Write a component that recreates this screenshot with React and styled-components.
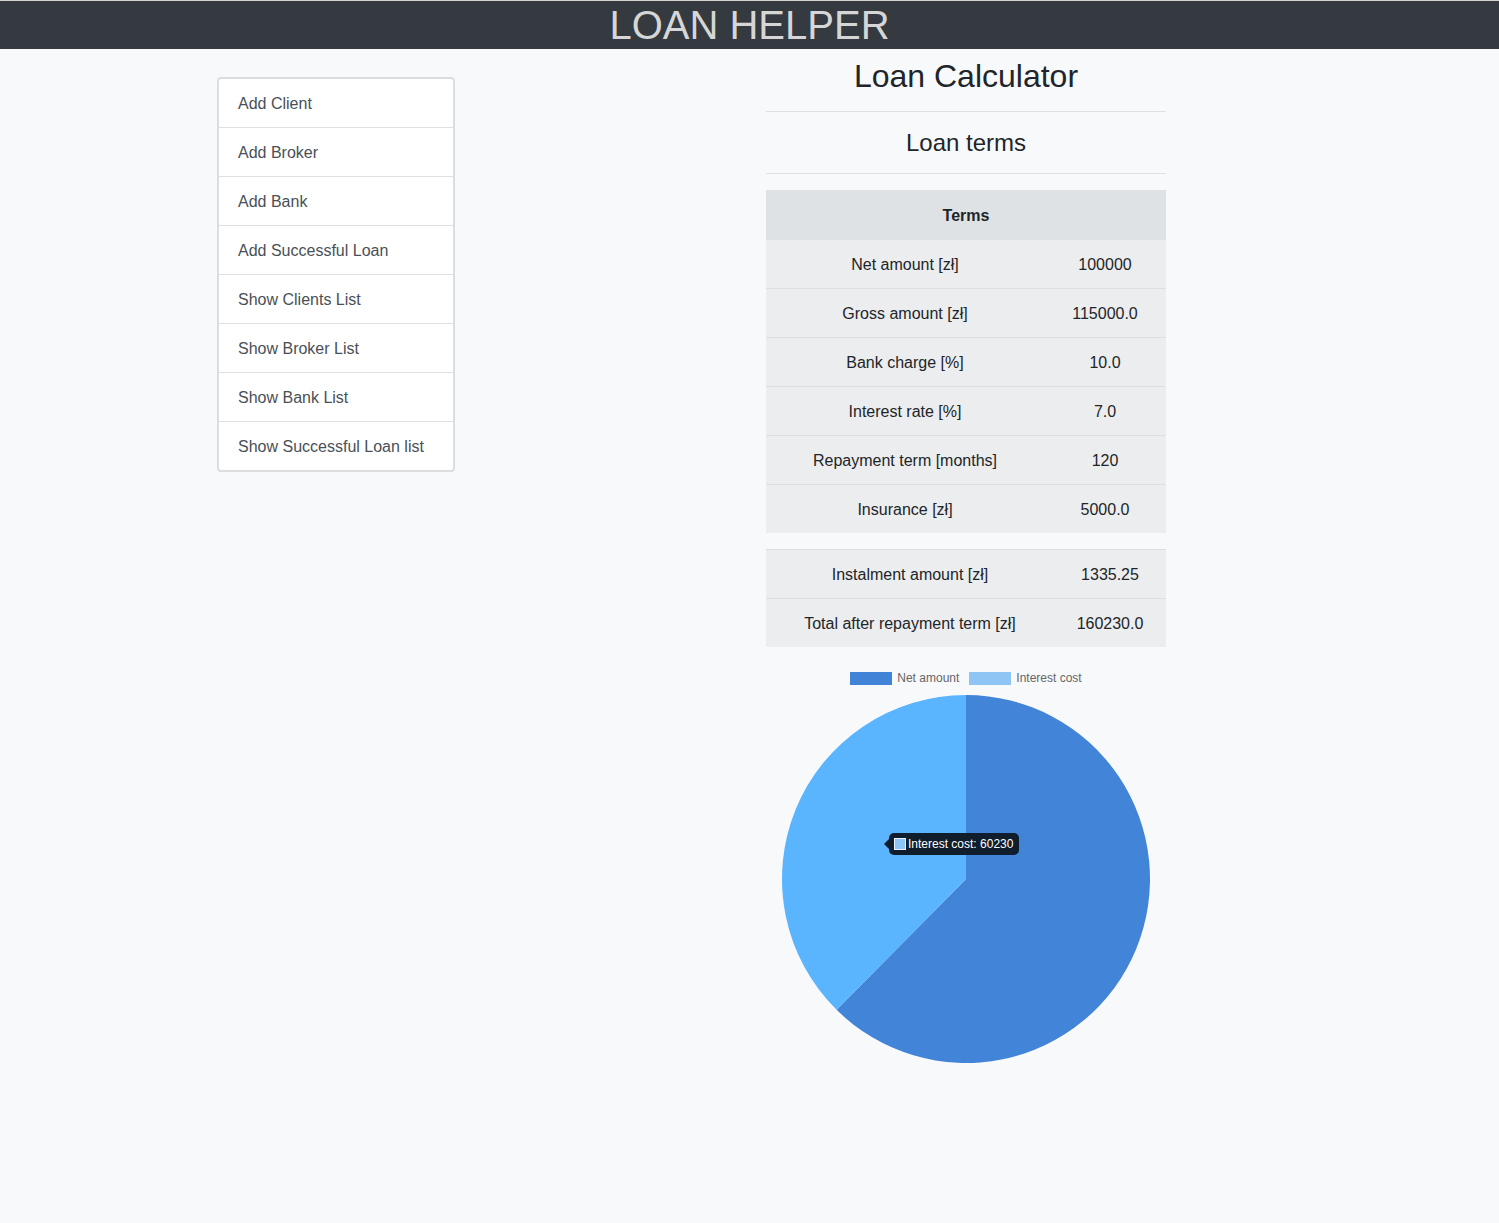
import React from 'react';
import styled, { createGlobalStyle } from 'styled-components';

const GlobalStyle = createGlobalStyle`
    body {
        margin: 0;
        background-color: #f8f9fa;
        font-family: 'Liberation Sans', Arial, sans-serif;
        color: #212529;
    }
`;

const Header = styled.div`
    height: 48px;
    border-top: 1px solid #d4d2cf;
    background-color: #343a40;
    color: #d6d6d6;
    font-size: 40px;
    line-height: 48px;
    text-align: center;
`;

const Main = styled.div`
    display: flex;
    align-items: flex-start;
    padding-left: 217px;
    gap: 311px;
`;

const Menu = styled.div`
    margin-top: 28px;
    width: 234px;
    border: 2px solid #dcdddf;
    border-radius: 4px;
    background-color: white;
    display: flex;
    flex-direction: column;
`;

const MenuItem = styled.div`
    padding: 13px 19px 11px;
    line-height: 24px;
    font-size: 16px;
    color: #495057;
    border-top: ${({ first }) => first ? 'none' : '1px solid #dfe0e2'};
`;

const Calculator = styled.div`
    width: 400px;
    display: flex;
    flex-direction: column;
    padding-top: 8px;
`;

const Title = styled.div`
    font-size: ${({ size }) => size}px;
    line-height: ${({ height }) => height}px;
    padding-top: ${({ shift }) => shift || 0}px;
    text-align: center;
    color: #212529;
`;

const Rule = styled.div`
    height: 1px;
    margin: 16px 0;
    background-color: #dfe0e1;
`;

const Table = styled.table`
    width: 100%;
    border-collapse: collapse;
    margin-bottom: 16px;
    font-size: 16px;
    line-height: 24px;
    background-color: #ecedee;
`;

const HeadCell = styled.th`
    padding: 13px 12px 11px;
    background-color: #dfe2e5;
    border-top: 1px solid #dfe2e5;
    font-weight: bold;
    text-align: center;
`;

const Cell = styled.td`
    padding: 13px 12px 11px;
    text-align: center;
    border-top: 1px solid #dde0e3;
    width: ${({ width }) => width ? width + 'px' : 'auto'};
`;

const Legend = styled.div`
    display: flex;
    justify-content: center;
    gap: 10px;
    padding: 9px 0 10px;
    font-size: 12px;
    line-height: 13px;
    color: #666;
`;

const LegendItem = styled.div`
    display: flex;
    align-items: center;
    gap: 5px;
`;

const LegendBox = styled.span`
    width: 42px;
    height: 13px;
    background-color: ${({ color }) => color};
`;

const ChartArea = styled.div`
    position: relative;
    width: 400px;
    height: 368px;
`;

const Tooltip = styled.div`
    position: absolute;
    left: 123px;
    top: 138px;
    height: 22px;
    padding: 0 6px 0 5px;
    display: flex;
    align-items: center;
    gap: 2px;
    background-color: #0f1d2d;
    border-radius: 5px;
    color: white;
    font-size: 12px;

    &::before {
        content: '';
        position: absolute;
        left: -5px;
        top: 6px;
        border-top: 5px solid transparent;
        border-bottom: 5px solid transparent;
        border-right: 5px solid #0f1d2d;
    }
`;

const TooltipSwatch = styled.span`
    width: 10px;
    height: 10px;
    background-color: #8ec5f5;
    border: 1px solid #e6f2fd;
`;

const menu = [
    'Add Client',
    'Add Broker',
    'Add Bank',
    'Add Successful Loan',
    'Show Clients List',
    'Show Broker List',
    'Show Bank List',
    'Show Successful Loan list',
];

const terms = [
    ['Net amount [zł]', '100000'],
    ['Gross amount [zł]', '115000.0'],
    ['Bank charge [%]', '10.0'],
    ['Interest rate [%]', '7.0'],
    ['Repayment term [months]', '120'],
    ['Insurance [zł]', '5000.0'],
];

const results = [
    ['Instalment amount [zł]', '1335.25'],
    ['Total after repayment term [zł]', '160230.0'],
];

const NET = 100000;
const TOTAL = 160230;

const PieChart = () =>
{
    const cx = 200, cy = 184, r = 184;
    const angle = (NET / TOTAL) * 2 * Math.PI;
    const ex = cx + r * Math.sin(angle);
    const ey = cy - r * Math.cos(angle);
    const large = angle > Math.PI ? 1 : 0;

    return (
        <svg width="400" height="368" viewBox="0 0 400 368">
            <path
                d={`M${cx} ${cy} L${cx} ${cy - r} A${r} ${r} 0 ${large} 1 ${ex} ${ey} Z`}
                fill="#4284d7"
            />
            <path
                d={`M${cx} ${cy} L${ex} ${ey} A${r} ${r} 0 ${1 - large} 1 ${cx} ${cy - r} Z`}
                fill="#5ab4fe"
            />
        </svg>
    );
}

const App = () =>
{
    return (
        <>
            <GlobalStyle />
            <Header>LOAN HELPER</Header>
            <Main>
                <Menu>
                    {menu.map((item, i) => (
                        <MenuItem key={item} first={i === 0}>{item}</MenuItem>
                    ))}
                </Menu>
                <Calculator>
                    <Title size={32} height={38}>Loan Calculator</Title>
                    <Rule />
                    <Title size={24} height={28} shift={1}>Loan terms</Title>
                    <Rule />
                    <Table>
                        <thead>
                            <tr><HeadCell colSpan={2}>Terms</HeadCell></tr>
                        </thead>
                        <tbody>
                            {terms.map(([label, value]) => (
                                <tr key={label}>
                                    <Cell width={254}>{label}</Cell>
                                    <Cell>{value}</Cell>
                                </tr>
                            ))}
                        </tbody>
                    </Table>
                    <Table>
                        <tbody>
                            {results.map(([label, value]) => (
                                <tr key={label}>
                                    <Cell width={264}>{label}</Cell>
                                    <Cell>{value}</Cell>
                                </tr>
                            ))}
                        </tbody>
                    </Table>
                    <Legend>
                        <LegendItem>
                            <LegendBox color="#4183d7" />
                            Net amount
                        </LegendItem>
                        <LegendItem>
                            <LegendBox color="#8ec5f5" />
                            Interest cost
                        </LegendItem>
                    </Legend>
                    <ChartArea>
                        <PieChart />
                        <Tooltip>
                            <TooltipSwatch />
                            Interest cost: 60230
                        </Tooltip>
                    </ChartArea>
                </Calculator>
            </Main>
        </>
    );
}

export default App;
